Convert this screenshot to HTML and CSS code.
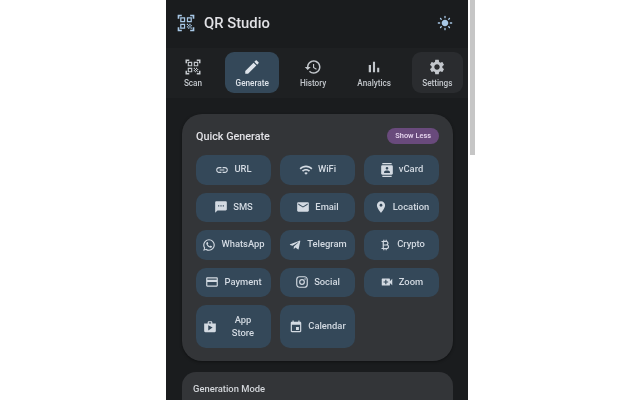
FILE: index.html
```html
<!DOCTYPE html>
<html lang="en">
<head>
<meta charset="utf-8">
<title>QR Studio</title>
<link rel="stylesheet" href="styles.css">
</head>
<body>
<div class="phone">
  <div class="app">
    <header class="topbar">
      <div class="brand">
        <svg class="brand-icon" viewBox="0 0 24 24"><path d="M9.5 6.5v3h-3v-3h3M11 5H5v6h6V5zm-1.5 9.5v3h-3v-3h3M11 13H5v6h6v-6zm6.5-6.5v3h-3v-3h3M19 5h-6v6h6V5zm-6 8h1.5v1.5H13V13zm1.5 1.5H16V16h-1.5v-1.5zM16 13h1.5v1.5H16V13zm-3 3h1.5v1.5H13V16zm1.5 1.5H16V19h-1.5v-1.5zM16 16h1.5v1.5H16V16zm1.5-1.5H19V16h-1.5v-1.5zm0 3H19V19h-1.5v-1.5zM22 7h-2V4h-3V2h5v5zm0 15v-5h-2v3h-3v2h5zM2 22h5v-2H4v-3H2v5zM2 2v5h2V4h3V2H2z"/></svg>
        <span class="brand-name">QR Studio</span>
      </div>
      <svg class="theme-icon" viewBox="0 0 24 24"><path d="M12 7c-2.76 0-5 2.24-5 5s2.24 5 5 5 5-2.24 5-5-2.24-5-5-5zM2 13h2c.55 0 1-.45 1-1s-.45-1-1-1H2c-.55 0-1 .45-1 1s.45 1 1 1zm18 0h2c.55 0 1-.45 1-1s-.45-1-1-1h-2c-.55 0-1 .45-1 1s.45 1 1 1zM11 2v2c0 .55.45 1 1 1s1-.45 1-1V2c0-.55-.45-1-1-1s-1 .45-1 1zm0 18v2c0 .55.45 1 1 1s1-.45 1-1v-2c0-.55-.45-1-1-1s-1 .45-1 1zM5.99 4.58c-.39-.39-1.03-.39-1.41 0-.39.39-.39 1.03 0 1.41l1.06 1.06c.39.39 1.03.39 1.41 0s.39-1.03 0-1.41L5.99 4.58zm12.37 12.37c-.39-.39-1.03-.39-1.41 0-.39.39-.39 1.03 0 1.41l1.06 1.06c.39.39 1.03.39 1.41 0 .39-.39.39-1.03 0-1.41l-1.06-1.06zm1.06-10.96c.39-.39.39-1.03 0-1.41-.39-.39-1.03-.39-1.41 0l-1.06 1.06c-.39.39-.39 1.03 0 1.41s1.03.39 1.41 0l1.06-1.06zM7.05 18.36c.39-.39.39-1.03 0-1.41-.39-.39-1.03-.39-1.41 0l-1.06 1.06c-.39.39-.39 1.03 0 1.41s1.03.39 1.41 0l1.06-1.06z"/></svg>
    </header>
    <nav class="tabs">
      <div class="tab">
        <svg class="tab-icon" viewBox="0 0 24 24"><path d="M9.5 6.5v3h-3v-3h3M11 5H5v6h6V5zm-1.5 9.5v3h-3v-3h3M11 13H5v6h6v-6zm6.5-6.5v3h-3v-3h3M19 5h-6v6h6V5zm-6 8h1.5v1.5H13V13zm1.5 1.5H16V16h-1.5v-1.5zM16 13h1.5v1.5H16V13zm-3 3h1.5v1.5H13V16zm1.5 1.5H16V19h-1.5v-1.5zM16 16h1.5v1.5H16V16zm1.5-1.5H19V16h-1.5v-1.5zm0 3H19V19h-1.5v-1.5zM22 7h-2V4h-3V2h5v5zm0 15v-5h-2v3h-3v2h5zM2 22h5v-2H4v-3H2v5zM2 2v5h2V4h3V2H2z"/></svg>
        <span>Scan</span>
      </div>
      <div class="tab tab-active">
        <svg class="tab-icon" viewBox="0 0 24 24"><path d="M3 17.25V21h3.75L17.81 9.94l-3.75-3.75L3 17.25zM20.71 7.04c.39-.39.39-1.02 0-1.41l-2.34-2.34c-.39-.39-1.02-.39-1.41 0l-1.83 1.83 3.75 3.75 1.83-1.83z"/></svg>
        <span>Generate</span>
      </div>
      <div class="tab">
        <svg class="tab-icon" viewBox="0 0 24 24"><path d="M13 3c-4.97 0-9 4.03-9 9H1l3.89 3.89.07.14L9 12H6c0-3.87 3.13-7 7-7s7 3.13 7 7-3.13 7-7 7c-1.93 0-3.68-.79-4.94-2.06l-1.42 1.42C8.27 19.99 10.51 21 13 21c4.97 0 9-4.03 9-9s-4.03-9-9-9zm-1 5v5l4.28 2.54.72-1.21-3.5-2.08V8H12z"/></svg>
        <span>History</span>
      </div>
      <div class="tab">
        <svg class="tab-icon" viewBox="0 0 24 24"><path d="M5 9.2h3V19H5zM10.6 5h2.8v14h-2.8zm5.6 8H19v6h-2.8z"/></svg>
        <span>Analytics</span>
      </div>
      <div class="tab tab-hover">
        <svg class="tab-icon" viewBox="0 0 24 24"><path d="M19.14 12.94c.04-.3.06-.61.06-.94 0-.32-.02-.64-.07-.94l2.03-1.58c.18-.14.23-.41.12-.61l-1.92-3.32c-.12-.22-.37-.29-.59-.22l-2.39.96c-.5-.38-1.03-.7-1.62-.94l-.36-2.54c-.04-.24-.24-.41-.48-.41h-3.84c-.24 0-.43.17-.47.41l-.36 2.54c-.59.24-1.13.57-1.62.94l-2.39-.96c-.22-.08-.47 0-.59.22L2.74 8.87c-.12.21-.08.47.12.61l2.03 1.58c-.05.3-.09.63-.09.94s.02.64.07.94l-2.03 1.58c-.18.14-.23.41-.12.61l1.92 3.32c.12.22.37.29.59.22l2.39-.96c.5.38 1.03.7 1.62.94l.36 2.54c.05.24.24.41.48.41h3.84c.24 0 .44-.17.47-.41l.36-2.54c.59-.24 1.13-.56 1.62-.94l2.39.96c.22.08.47 0 .59-.22l1.92-3.32c.12-.22.07-.47-.12-.61l-2.01-1.58zM12 15.6c-1.98 0-3.6-1.62-3.6-3.6s1.62-3.6 3.6-3.6 3.6 1.62 3.6 3.6-1.62 3.6-3.6 3.6z"/></svg>
        <span>Settings</span>
      </div>
    </nav>
    <main class="content">
      <section class="card quick">
        <div class="quick-head">
          <h2 class="quick-title">Quick Generate</h2>
          <span class="pill">Show Less</span>
        </div>
        <div class="grid">
          <div class="qbtn"><svg viewBox="0 0 24 24"><path d="M3.9 12c0-1.71 1.39-3.1 3.1-3.1h4V7H7c-2.76 0-5 2.24-5 5s2.24 5 5 5h4v-1.9H7c-1.71 0-3.1-1.39-3.1-3.1zM8 13h8v-2H8v2zm9-6h-4v1.9h4c1.71 0 3.1 1.39 3.1 3.1s-1.39 3.1-3.1 3.1h-4V17h4c2.76 0 5-2.24 5-5s-2.24-5-5-5z"/></svg><span>URL</span></div>
          <div class="qbtn"><svg viewBox="0 0 24 24"><path d="M1 9l2 2c4.97-4.97 13.03-4.97 18 0l2-2C16.93 2.93 7.08 2.93 1 9zm8 8l3 3 3-3c-1.65-1.66-4.34-1.66-6 0zm-4-4l2 2c2.76-2.76 7.24-2.76 10 0l2-2C15.14 9.14 8.87 9.14 5 13z"/></svg><span>WiFi</span></div>
          <div class="qbtn"><svg viewBox="0 0 24 24"><path d="M20 0H4v2h16V0zM4 24h16v-2H4v2zM20 4H4c-1.1 0-2 .9-2 2v12c0 1.1.9 2 2 2h16c1.1 0 2-.9 2-2V6c0-1.1-.9-2-2-2zm-8 2.75c1.24 0 2.25 1.01 2.25 2.25s-1.01 2.25-2.25 2.25S9.75 10.24 9.75 9 10.76 6.75 12 6.75zM17 17H7v-1.5c0-1.67 3.33-2.5 5-2.5s5 .83 5 2.5V17z"/></svg><span>vCard</span></div>
          <div class="qbtn"><svg viewBox="0 0 24 24"><path d="M20 2H4c-1.1 0-1.99.9-1.99 2L2 22l4-4h14c1.1 0 2-.9 2-2V4c0-1.1-.9-2-2-2zM9 11H7V9h2v2zm4 0h-2V9h2v2zm4 0h-2V9h2v2z"/></svg><span>SMS</span></div>
          <div class="qbtn"><svg viewBox="0 0 24 24"><path d="M20 4H4c-1.1 0-1.99.9-1.99 2L2 18c0 1.1.9 2 2 2h16c1.1 0 2-.9 2-2V6c0-1.1-.9-2-2-2zm0 4l-8 5-8-5V6l8 5 8-5v2z"/></svg><span>Email</span></div>
          <div class="qbtn"><svg viewBox="0 0 24 24"><path d="M12 2C8.13 2 5 5.13 5 9c0 5.25 7 13 7 13s7-7.75 7-13c0-3.87-3.13-7-7-7zm0 9.5c-1.38 0-2.5-1.12-2.5-2.5s1.12-2.5 2.5-2.5 2.5 1.12 2.5 2.5-1.12 2.5-2.5 2.5z"/></svg><span>Location</span></div>
          <div class="qbtn"><svg viewBox="0 0 24 24"><path d="M16.75 13.96c.25.13.41.2.46.3.06.11.04.61-.21 1.18-.2.56-1.24 1.1-1.7 1.12-.46.02-.47.36-2.96-.73-2.49-1.09-3.99-3.75-4.11-3.92-.12-.17-.96-1.38-.92-2.61.05-1.22.69-1.8.95-2.04.24-.26.51-.29.68-.26h.47c.15 0 .36-.06.55.45l.69 1.87c.06.13.1.28.01.44l-.27.41-.39.42c-.12.12-.26.25-.12.5.12.26.62 1.09 1.32 1.78.91.88 1.71 1.17 1.95 1.3.24.14.39.12.54-.04l.81-.94c.19-.25.35-.19.58-.11l1.67.88M12 2a10 10 0 0 1 10 10 10 10 0 0 1-10 10c-1.97 0-3.8-.57-5.35-1.55L2 22l1.55-4.65A9.969 9.969 0 0 1 2 12 10 10 0 0 1 12 2m0 2a8 8 0 0 0-8 8c0 1.72.54 3.31 1.46 4.61L4.5 19.5l2.89-.96A7.95 7.95 0 0 0 12 20a8 8 0 0 0 8-8 8 8 0 0 0-8-8z"/></svg><span>WhatsApp</span></div>
          <div class="qbtn"><svg viewBox="0 0 24 24"><path d="M9.78 18.65l.28-4.23 7.68-6.92c.34-.31-.07-.46-.52-.19L7.74 13.3 3.64 12c-.88-.25-.89-.86.2-1.3l15.97-6.16c.73-.33 1.43.18 1.15 1.3l-2.72 12.81c-.19.91-.74 1.13-1.5.71L12.6 16.3l-1.99 1.93c-.23.23-.42.42-.83.42z"/></svg><span>Telegram</span></div>
          <div class="qbtn"><svg viewBox="0 0 24 24"><path d="M17.06 11.57c.59-.69.94-1.59.94-2.57 0-1.86-1.27-3.43-3-3.87V3h-2v2h-2V3H9v2H6v2h2v10H6v2h3v2h2v-2h2v2h2v-2c2.21 0 4-1.79 4-4 0-1.45-.78-2.73-1.94-3.43zM10 7h4c1.1 0 2 .9 2 2s-.9 2-2 2h-4V7zm5 10h-5v-4h5c1.1 0 2 .9 2 2s-.9 2-2 2z"/></svg><span>Crypto</span></div>
          <div class="qbtn"><svg viewBox="0 0 24 24"><path d="M20 4H4c-1.11 0-1.99.89-1.99 2L2 18c0 1.11.89 2 2 2h16c1.11 0 2-.89 2-2V6c0-1.11-.89-2-2-2zm0 14H4v-6h16v6zm0-10H4V6h16v2z"/></svg><span>Payment</span></div>
          <div class="qbtn"><svg viewBox="0 0 24 24"><path d="M7.8 2h8.4C19.4 2 22 4.6 22 7.8v8.4a5.8 5.8 0 0 1-5.8 5.8H7.8C4.6 22 2 19.4 2 16.2V7.8A5.8 5.8 0 0 1 7.8 2m-.2 2A3.6 3.6 0 0 0 4 7.6v8.8C4 18.39 5.61 20 7.6 20h8.8a3.6 3.6 0 0 0 3.6-3.6V7.6C20 5.61 18.39 4 16.4 4H7.6m9.65 1.5a1.25 1.25 0 0 1 1.25 1.25A1.25 1.25 0 0 1 17.25 8 1.25 1.25 0 0 1 16 6.75a1.25 1.25 0 0 1 1.25-1.25M12 7a5 5 0 0 1 5 5 5 5 0 0 1-5 5 5 5 0 0 1-5-5 5 5 0 0 1 5-5m0 2a3 3 0 0 0-3 3 3 3 0 0 0 3 3 3 3 0 0 0 3-3 3 3 0 0 0-3-3z"/></svg><span>Social</span></div>
          <div class="qbtn"><svg viewBox="0 0 24 24"><path d="M17 10.5V7c0-.55-.45-1-1-1H4c-.55 0-1 .45-1 1v10c0 .55.45 1 1 1h12c.55 0 1-.45 1-1v-3.5l4 4v-11l-4 4zM14 13h-3v3H9v-3H6v-2h3V8h2v3h3v2z"/></svg><span>Zoom</span></div>
          <div class="qbtn qbtn-tall"><svg viewBox="0 0 24 24"><path d="M16 6V4c0-1.11-.89-2-2-2h-4c-1.11 0-2 .89-2 2v2H2v13c0 1.11.89 2 2 2h16c1.11 0 2-.89 2-2V6h-6zm-6-2h4v2h-4V4zM9 18V9l7.5 4L9 18z"/></svg><span class="wrap-label">App<br>Store</span></div>
          <div class="qbtn qbtn-tall"><svg viewBox="0 0 24 24"><path d="M17 12h-5v5h5v-5zM16 1v2H8V1H6v2H5c-1.11 0-1.99.9-1.99 2L3 19c0 1.1.89 2 2 2h14c1.1 0 2-.9 2-2V5c0-1.1-.9-2-2-2h-1V1h-2zm3 18H5V8h14v11z"/></svg><span>Calendar</span></div>
        </div>
      </section>
      <section class="card mode">
        <h3 class="mode-title">Generation Mode</h3>
      </section>
    </main>
  </div>
  <div class="thumb"></div>
</div>
</body>
</html>
```
FILE: styles.css
```css
* { box-sizing: border-box; }
html, body { height: 100%; }
body {
  margin: 0;
  background: #fff;
  font-family: Roboto, sans-serif;
  overflow: hidden;
}
.phone {
  position: relative;
  width: 310px;
  height: 400px;
  margin-left: 166px;
  overflow: hidden;
}
.thumb {
  position: absolute;
  left: 304px;
  top: 0;
  width: 5px;
  height: 155px;
  background: #c6c6c6;
}
.app { width: 302px; height: 400px; overflow: hidden; background: #1a1c1e; color: #e2e2e6; filter: blur(.35px); }
.topbar {
  height: 48px;
  padding: 0 15.5px 2px 12px;
  display: flex;
  align-items: center;
  justify-content: space-between;
}
.brand { display: flex; align-items: center; gap: 8px; }
.brand-icon { width: 20px; height: 20px; fill: #a8c8e6; display: block; margin-left: -2px; }
.brand-name { font-size: 14.8px; font-weight: 500; color: #e2e2e6; }
.theme-icon { width: 16px; height: 16px; fill: #a8c8e6; display: block; }
.tabs {
  height: 50px;
  padding: 0 5px 1px;
  background: #1e2022;
  display: flex;
  align-items: center;
  justify-content: space-between;
}
.tab {
  min-width: 44px;
  height: 41px;
  padding: 0 10.5px;
  border-radius: 9px;
  display: flex;
  flex-direction: column;
  align-items: center;
  justify-content: center;
  gap: 2px;
  font-size: 8.2px;
  font-weight: 500;
  color: #c3c7cc;
}
.tab-icon { width: 18px; height: 18px; fill: #c3c7cc; display: block; }
.tab-active { background: #344859; color: #dde3ea; }
.tab-active .tab-icon { fill: #dde3ea; }
.tab-hover { background: #2a2c2f; }
.content {
  padding: 16px 15px 0 16px;
  display: flex;
  flex-direction: column;
  gap: 11px;
}
.card { background: #333538; }
.quick {
  border-radius: 20px;
  padding: 14px 14px 13px;
  box-shadow: 0 1px 3px rgba(0, 0, 0, .4);
}
.quick-head {
  height: 16px;
  margin-bottom: 11px;
  display: flex;
  align-items: center;
  justify-content: space-between;
}
.quick-title { margin: 0; font-size: 10.8px; font-weight: 500; color: #e2e2e6; }
.pill {
  height: 16px;
  padding: 0 8px;
  border-radius: 8px;
  background: #694a7c;
  color: #ead9f2;
  font-size: 7.4px;
  font-weight: 500;
  line-height: 16px;
}
.grid {
  display: grid;
  grid-template-columns: repeat(3, 1fr);
  gap: 8px 9px;
}
.qbtn {
  height: 29.5px;
  padding: 0 6px;
  border-radius: 10px;
  background: #344859;
  display: flex;
  align-items: center;
  justify-content: center;
  gap: 5px;
  font-size: 9.4px;
  font-weight: 500;
  line-height: 13px;
  color: #d3dae2;
  text-align: center;
}
.qbtn span { margin-bottom: 2px; }
.qbtn svg { width: 14px; height: 14px; fill: #d3dae2; flex: none; display: block; }
.qbtn-tall { height: 43px; padding: 0 7px; }
.wrap-label { flex: 1; }
.mode {
  height: 60px;
  border-radius: 14px;
  padding: 11px;
}
.mode-title { margin: 0; font-size: 9.4px; font-weight: 500; color: #d3d6da; }
```
